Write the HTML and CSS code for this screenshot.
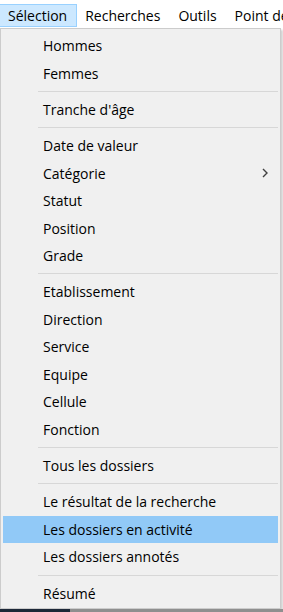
FILE: index.html
```html
<!DOCTYPE html>
<html lang="fr">
<head>
<meta charset="utf-8">
<title>Sélection</title>
<link rel="stylesheet" href="styles.css">
</head>
<body>
<div class="menubar">
  <span class="mb-item active">Sélection</span>
  <span class="mb-item">Recherches</span>
  <span class="mb-item">Outils</span>
  <span class="mb-item">Point de vue</span>
</div>
<div class="menu">
  <div class="item">Hommes</div>
  <div class="item">Femmes</div>
  <div class="sep"><span class="line"></span></div>
  <div class="item">Tranche d'âge</div>
  <div class="sep"><span class="line"></span></div>
  <div class="item">Date de valeur</div>
  <div class="item">Catégorie
    <svg class="chev" width="6" height="10" viewBox="0 0 6 10"><path d="M1 1 L5 5 L1 9" fill="none" stroke="#404040" stroke-width="1.4"/></svg>
  </div>
  <div class="item">Statut</div>
  <div class="item">Position</div>
  <div class="item">Grade</div>
  <div class="sep"><span class="line"></span></div>
  <div class="item">Etablissement</div>
  <div class="item">Direction</div>
  <div class="item">Service</div>
  <div class="item">Equipe</div>
  <div class="item">Cellule</div>
  <div class="item">Fonction</div>
  <div class="sep"><span class="line"></span></div>
  <div class="item">Tous les dossiers</div>
  <div class="sep"><span class="line"></span></div>
  <div class="item">Le résultat de la recherche</div>
  <div class="item hot">Les dossiers en activité</div>
  <div class="item">Les dossiers annotés</div>
  <div class="sep"><span class="line"></span></div>
  <div class="item">Résumé</div>
</div>
<div class="taskbar"><span class="dark"></span></div>
</body>
</html>
```
FILE: styles.css
```css
html, body {
  margin: 0;
  padding: 0;
  background: #ffffff;
  overflow: hidden;
}
body {
  width: 283px;
  height: 612px;
  font-family: "Open Sans", "Noto Sans", sans-serif;
  font-size: 14px;
  color: #000;
}
.menubar {
  height: 28px;
  box-sizing: border-box;
  padding-top: 4px;
  display: flex;
  white-space: nowrap;
  overflow: hidden;
}
.mb-item {
  height: 23px;
  box-sizing: border-box;
  padding: 0 9px 0 8px;
  line-height: 21px;
  border: 1px solid transparent;
  border-left-width: 0;
}
.mb-item.active {
  background: #cce8ff;
  border-color: #99d1ff;
}
.menu {
  width: 281px;
  box-sizing: border-box;
  background: #f0f0f0;
  border: 1px solid #cccccc;
  padding: 3px 2px 0 2px;
  height: 581px;
  box-shadow: 2px 2px 2px rgba(0, 0, 0, 0.18);
}
.item {
  height: 27.5px;
  line-height: 27.5px;
  padding-left: 40px;
  padding-right: 10px;
  display: flex;
  justify-content: space-between;
  align-items: center;
  white-space: nowrap;
}
.item.hot {
  background: #91c9f7;
}
.chev {
  display: block;
}
.sep {
  height: 8.75px;
  display: flex;
  align-items: center;
}
.sep .line {
  display: block;
  height: 1px;
  margin-left: 35px;
  flex: 1;
  background: #d7d7d7;
}
.taskbar {
  height: 3px;
  background: #8f8f8f;
  display: flex;
}
.taskbar .dark {
  width: 70px;
  background: #1d2838;
}
```
